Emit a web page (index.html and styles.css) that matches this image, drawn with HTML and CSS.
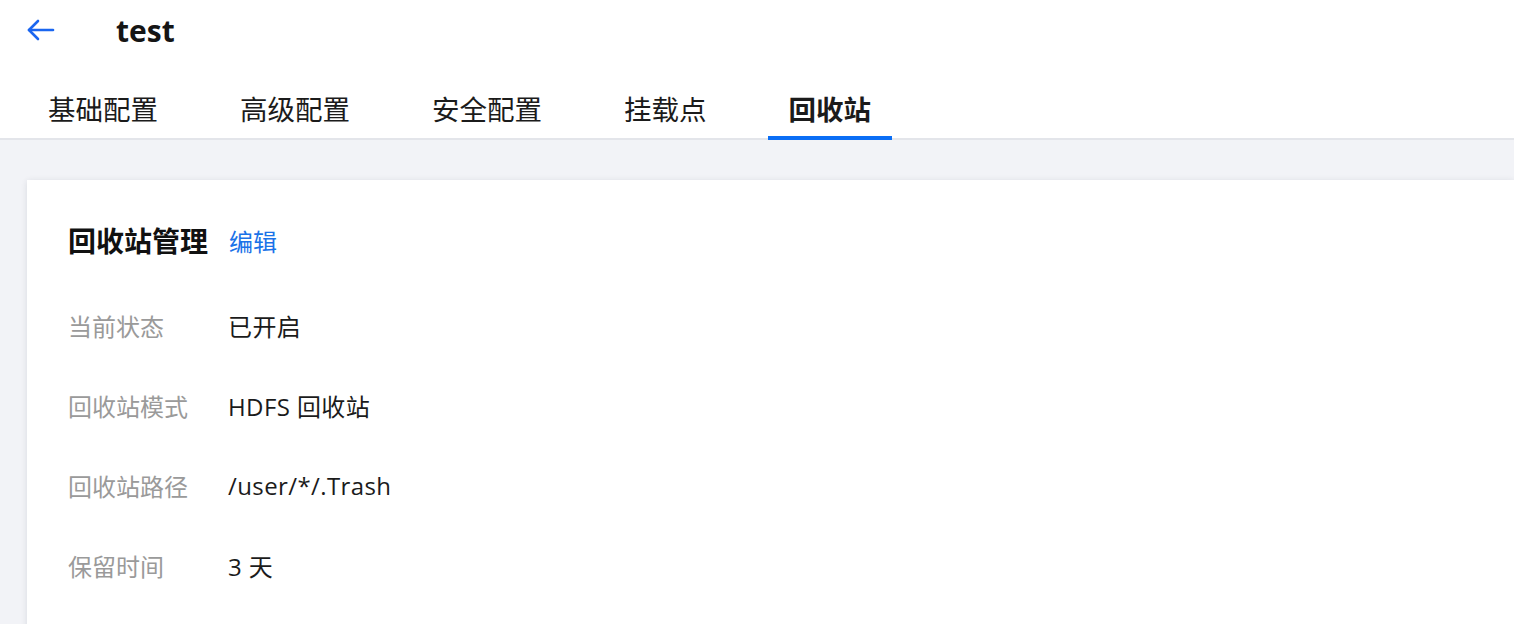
FILE: index.html
```html
<!DOCTYPE html>
<html lang="zh-CN">
<head>
<meta charset="utf-8">
<title>test</title>
<link rel="stylesheet" href="styles.css">
</head>
<body>
<header class="top">
  <div class="title-bar">
    <a class="back" href="#" aria-label="返回">
      <svg width="28" height="22" viewBox="0 0 28 22" fill="none" stroke="currentColor" stroke-width="2.6" stroke-linecap="round" stroke-linejoin="round">
        <path d="M2 11H26"/>
        <path d="M11 2L2 11L11 20"/>
      </svg>
    </a>
    <h1 class="name">test</h1>
  </div>
  <nav class="tabs">
    <a class="tab" href="#">基础配置</a>
    <a class="tab" href="#">高级配置</a>
    <a class="tab" href="#">安全配置</a>
    <a class="tab" href="#">挂载点</a>
    <a class="tab active" href="#">回收站</a>
  </nav>
</header>
<main class="content">
  <section class="card">
    <div class="card-head">
      <h2 class="card-title">回收站管理</h2>
      <a class="edit" href="#">编辑</a>
    </div>
    <dl class="info">
      <div class="row"><dt>当前状态</dt><dd>已开启</dd></div>
      <div class="row"><dt>回收站模式</dt><dd>HDFS 回收站</dd></div>
      <div class="row"><dt>回收站路径</dt><dd>/user/*/.Trash</dd></div>
      <div class="row"><dt>保留时间</dt><dd>3 天</dd></div>
    </dl>
  </section>
</main>
</body>
</html>
```
FILE: styles.css
```css
* { box-sizing: border-box; }

html, body {
  margin: 0;
  padding: 0;
  height: 100%;
  overflow: hidden;
}

body {
  background: #f2f3f7;
  font-family: "Open Sans", "Noto Sans CJK SC", sans-serif;
  color: #1b1b1b;
}

.top {
  background: #fff;
  border-bottom: 2px solid #e3e5ea;
}

.title-bar {
  display: flex;
  align-items: center;
  height: 60px;
  padding-left: 27px;
}

.back {
  display: flex;
  color: #1a66f0;
  width: 28px;
  margin-right: 61px;
}

.name {
  margin: 0;
  font-size: 30px;
  font-weight: 700;
  color: #151515;
}

.tabs {
  display: flex;
  gap: 40px;
  padding-left: 27px;
  height: 78px;
  align-items: stretch;
}

.tab {
  display: flex;
  align-items: center;
  padding: 20px 21px 0;
  font-size: 27.5px;
  color: #1b1b1b;
  text-decoration: none;
  margin-bottom: -2px;
  border-bottom: 4px solid transparent;
}

.tab.active {
  font-weight: 700;
  border-bottom-color: #0a6ef5;
}

.content {
  padding: 40px 0 0 27px;
}

.card {
  background: #fff;
  box-shadow: 0 1px 6px rgba(30, 40, 60, 0.12);
  padding: 38px 41px 40px;
  min-height: 500px;
}

.card-head {
  display: flex;
  align-items: center;
  gap: 21px;
  height: 44px;
}

.card-title {
  margin: 0;
  font-size: 28px;
  font-weight: 700;
  color: #111;
}

.edit {
  font-size: 24px;
  color: #1a72e8;
  text-decoration: none;
}

.info {
  margin: 23px 0 0;
}

.row {
  display: flex;
  align-items: center;
  height: 80px;
}

.row dt {
  width: 160px;
  font-size: 24px;
  color: #9a9a9a;
}

.row dd {
  margin: 0;
  font-size: 24px;
  letter-spacing: 0.4px;
  color: #1b1b1b;
}
```
